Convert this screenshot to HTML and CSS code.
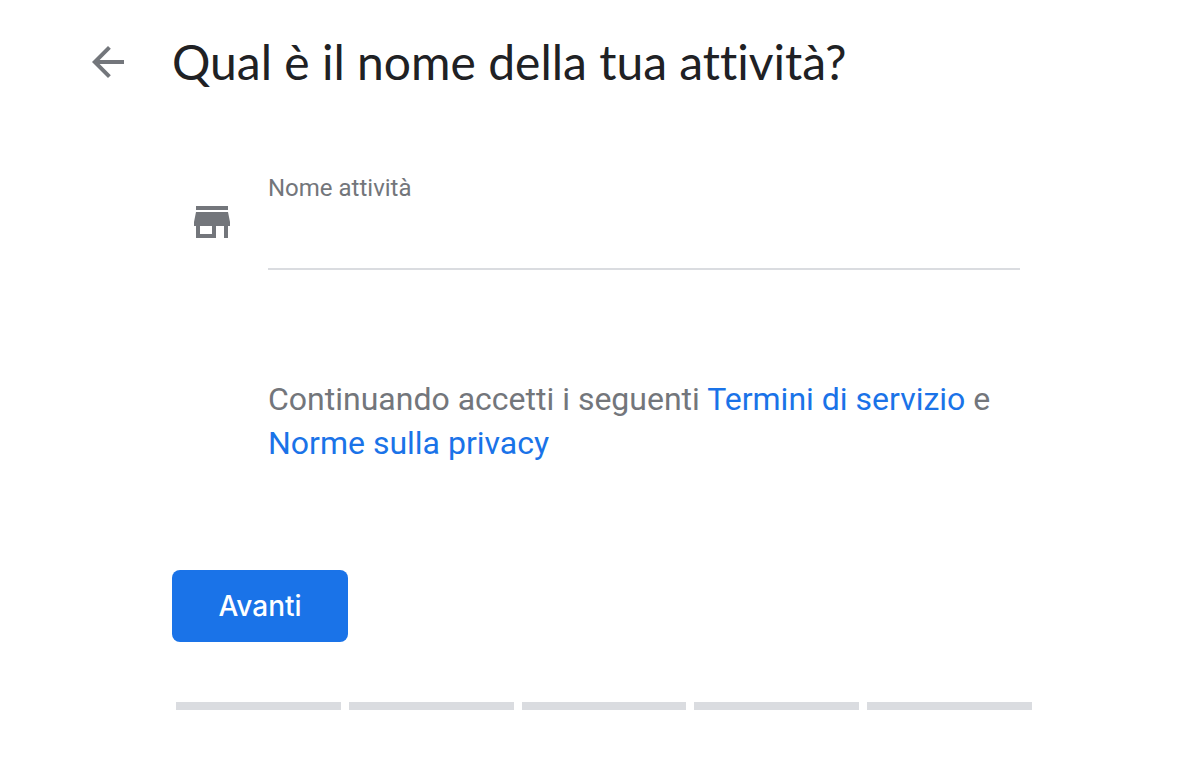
FILE: index.html
```html
<!DOCTYPE html>
<html lang="it">
<head>
<meta charset="utf-8">
<title>Nome attività</title>
<link rel="stylesheet" href="styles.css">
</head>
<body>
<main class="page">
  <header class="header">
    <button class="back" type="button" aria-label="Indietro">
      <svg viewBox="4 4 16 16" width="32" height="32" aria-hidden="true"><path d="M20 11H7.83l5.59-5.59L12 4l-8 8 8 8 1.41-1.41L7.83 13H20v-2z"/></svg>
    </button>
    <h1 class="title">Qual è il nome della tua attività?</h1>
  </header>
  <form class="form">
    <div class="field">
      <svg class="store" viewBox="3 4 18 16" width="36" height="32" aria-hidden="true"><path d="M20 4H4v2h16V4zm1 10v-2l-1-5H4l-1 5v2h1v6h10v-6h4v6h2v-6h1zm-9 4H6v-4h6v4z"/></svg>
      <div class="control">
        <label class="label" for="name">Nome attività</label>
        <input class="input" id="name" type="text">
      </div>
    </div>
    <p class="terms">Continuando accetti i seguenti <a href="#terms">Termini di servizio</a> e <a href="#privacy">Norme sulla privacy</a></p>
    <button class="next" type="submit">Avanti</button>
  </form>
  <div class="steps">
    <span class="step"></span><span class="step"></span><span class="step"></span><span class="step"></span><span class="step"></span>
  </div>
</main>
</body>
</html>
```
FILE: styles.css
```css
* { box-sizing: border-box; }
body {
  margin: 0;
  background: #fff;
  color: #202124;
  font-family: Roboto, sans-serif;
}
.page { padding: 32px 158px 54px 92px; }
.header {
  display: flex;
  align-items: center;
  gap: 48px;
}
.back {
  display: flex;
  padding: 0;
  border: 0;
  background: none;
  fill: #73767b;
}
.title {
  margin: 0;
  font-family: Lato, sans-serif;
  font-size: 48px;
  font-weight: 400;
  font-variant-ligatures: none;
  line-height: 60px;
  white-space: nowrap;
}
.form { padding: 82px 12px 0 80px; }
.field {
  display: flex;
  gap: 38px;
  padding-left: 22px;
}
.store {
  flex: none;
  margin-top: 32px;
  fill: #73767b;
}
.control {
  display: flex;
  flex: 1;
  flex-direction: column;
}
.label {
  color: #73767b;
  font-size: 24px;
  line-height: 28px;
}
.input {
  height: 68px;
  padding: 0;
  border: 0;
  border-bottom: 2px solid #dadce0;
  outline: 0;
  background: none;
  font: 32px/44px Roboto, sans-serif;
}
.terms {
  margin: 107px 0 0 96px;
  color: #73767b;
  font-size: 32px;
  line-height: 44px;
}
.terms a {
  color: #1a73e8;
  text-decoration: none;
}
.next {
  min-width: 176px;
  height: 72px;
  margin-top: 105px;
  padding: 0 40px;
  border: 0;
  border-radius: 8px;
  background: #1a73e8;
  color: #fff;
  font: 500 28px/36px Inter, sans-serif;
}
.steps {
  display: flex;
  gap: 8px;
  margin: 60px 0 0 84px;
}
.step {
  flex: 1;
  height: 8px;
  background: #dadce0;
}
```
